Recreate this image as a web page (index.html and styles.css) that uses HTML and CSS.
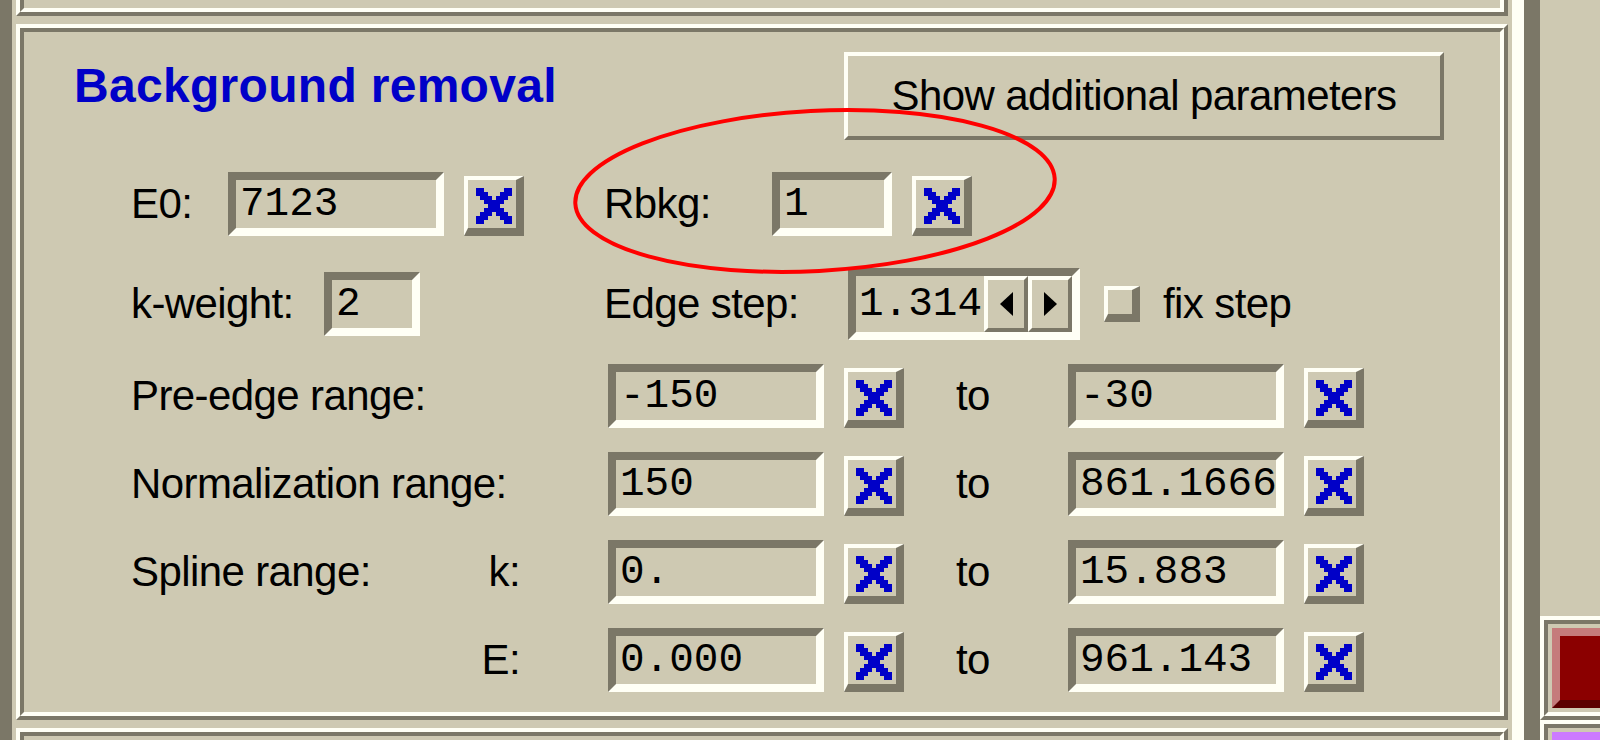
FILE: index.html
```html
<!DOCTYPE html>
<html>
<head>
<meta charset="utf-8">
<title>Background removal</title>
<link rel="stylesheet" href="styles.css">
</head>
<body>
<div class="app">
  <div class="left-strip"></div>
  <div class="main-col">
    <div class="ridge top-panel"><div class="ridge-in"></div></div>
    <div class="ridge main-panel">
      <div class="ridge-in main-inner">
        <div class="header">
          <div class="title">Background removal</div>
          <div class="btn-show">Show additional parameters</div>
        </div>

        <div class="row row1">
          <div class="lbl w-e0">E0:</div>
          <div class="entry w216">7123</div>
          <div class="xbtn"><svg class="xicon" viewBox="0 0 9 9"><use href="#xg"/></svg></div>
          <div class="lbl w-rbkg">Rbkg:</div>
          <div class="entry w120">1</div>
          <div class="xbtn"><svg class="xicon" viewBox="0 0 9 9"><use href="#xg"/></svg></div>
        </div>

        <div class="row row2">
          <div class="lbl w-kw">k-weight:</div>
          <div class="entry w96">2</div>
          <div class="lbl w-edge">Edge step:</div>
          <div class="spinbox">
            <div class="spin-text">1.314</div>
            <div class="spin-btn"><svg class="arrow" viewBox="0 0 13 24"><polygon points="13,0 13,24 0,12"/></svg></div>
            <div class="spin-btn"><svg class="arrow" viewBox="0 0 13 24"><polygon points="0,0 0,24 13,12"/></svg></div>
          </div>
          <div class="check"></div>
          <div class="lbl fix">fix step</div>
        </div>

        <div class="row range">
          <div class="lbl w-range">Pre-edge range:</div>
          <div class="entry w216">-150</div>
          <div class="xbtn"><svg class="xicon" viewBox="0 0 9 9"><use href="#xg"/></svg></div>
          <div class="lbl w-to">to</div>
          <div class="entry w216">-30</div>
          <div class="xbtn"><svg class="xicon" viewBox="0 0 9 9"><use href="#xg"/></svg></div>
        </div>

        <div class="row range">
          <div class="lbl w-range">Normalization range:</div>
          <div class="entry w216">150</div>
          <div class="xbtn"><svg class="xicon" viewBox="0 0 9 9"><use href="#xg"/></svg></div>
          <div class="lbl w-to">to</div>
          <div class="entry w216">861.1666</div>
          <div class="xbtn"><svg class="xicon" viewBox="0 0 9 9"><use href="#xg"/></svg></div>
        </div>

        <div class="row range">
          <div class="lbl w-range split"><span>Spline range:</span><span>k:</span></div>
          <div class="entry w216">0.</div>
          <div class="xbtn"><svg class="xicon" viewBox="0 0 9 9"><use href="#xg"/></svg></div>
          <div class="lbl w-to">to</div>
          <div class="entry w216">15.883</div>
          <div class="xbtn"><svg class="xicon" viewBox="0 0 9 9"><use href="#xg"/></svg></div>
        </div>

        <div class="row range">
          <div class="lbl w-range split"><span></span><span>E:</span></div>
          <div class="entry w216">0.000</div>
          <div class="xbtn"><svg class="xicon" viewBox="0 0 9 9"><use href="#xg"/></svg></div>
          <div class="lbl w-to">to</div>
          <div class="entry w216">961.143</div>
          <div class="xbtn"><svg class="xicon" viewBox="0 0 9 9"><use href="#xg"/></svg></div>
        </div>
      </div>
    </div>
    <div class="ridge bottom-panel"><div class="ridge-in"></div></div>
  </div>
  <div class="sash"></div>
  <div class="right-col">
    <div class="ridge rframe"><div class="ridge-in rframe-in"><div class="color-btn red"></div></div></div>
    <div class="ridge rframe last"><div class="ridge-in rframe-in"><div class="color-btn purple"></div></div></div>
  </div>
</div>

<svg class="overlay" width="1600" height="740" viewBox="0 0 1600 740">
  <ellipse cx="815" cy="191" rx="240" ry="80" transform="rotate(-3 815 191)" fill="none" stroke="#ff0000" stroke-width="4"/>
</svg>

<svg width="0" height="0" class="defs">
  <defs>
    <path id="xg" d="M0 0h2v1h-2z M7 0h2v1h-2z M0 1h3v1h-3z M6 1h3v1h-3z M1 2h3v1h-3z M5 2h3v1h-3z M2 3h5v1h-5z M3 4h3v1h-3z M2 5h5v1h-5z M1 6h3v1h-3z M5 6h3v1h-3z M0 7h3v1h-3z M6 7h3v1h-3z M0 8h2v1h-2z M7 8h2v1h-2z"/>
  </defs>
</svg>
</body>
</html>
```

FILE: styles.css
```css
* { box-sizing: border-box; margin: 0; padding: 0; }

html, body {
  width: 1600px;
  height: 740px;
  overflow: hidden;
}

body {
  background: #cec9b2;
  font-family: "Liberation Sans", Arial, sans-serif;
  color: #000;
  position: relative;
}

.app {
  display: flex;
  height: 740px;
  overflow: hidden;
}

.left-strip {
  flex: none;
  width: 12px;
  background: #7b7767;
}

.main-col {
  flex: none;
  width: 1500px;
  padding: 0 4px;
  display: flex;
  flex-direction: column;
  gap: 8px;
}

.ridge {
  border: 4px solid;
  border-color: #fffff5 #7b7767 #7b7767 #fffff5;
}

.ridge-in {
  height: 100%;
  border: 4px solid;
  border-color: #7b7767 #fffff5 #fffff5 #7b7767;
}

/* only the lower edge of the panel above is visible */
.top-panel {
  flex: none;
  height: 16px;
  border-top: 0;
}

.top-panel .ridge-in {
  border-top: 0;
}

.main-panel {
  flex: none;
  height: 696px;
}

/* only the upper edge of the panel below is visible */
.bottom-panel {
  flex: none;
  height: 12px;
  border-bottom: 0;
  overflow: hidden;
}

.bottom-panel .ridge-in {
  border-bottom: 0;
}

.main-inner {
  padding-top: 20px;
}

/* header */
.header {
  display: flex;
  height: 88px;
}

.title {
  flex: none;
  width: 770px;
  margin-left: 50px;
  margin-top: 10px;
  font-weight: bold;
  font-size: 48px;
  line-height: 48px;
  color: #0000c8;
  letter-spacing: 0.3px;
}

.btn-show {
  flex: none;
  width: 600px;
  height: 88px;
  border-style: solid;
  border-width: 4px;
  border-color: #fffff5 #7b7767 #7b7767 #fffff5;
  display: flex;
  align-items: center;
  justify-content: center;
  font-size: 42px;
  letter-spacing: -0.6px;
}

/* rows */
.row {
  display: flex;
  align-items: center;
  padding-left: 107px;
}

.row1 { margin-top: 32px; height: 64px; }
.row2 { margin-top: 32px; height: 72px; }
.range { margin-top: 24px; height: 64px; }

.lbl {
  flex: none;
  font-size: 42px;
  letter-spacing: -0.6px;
  white-space: nowrap;
}

.w-e0 { width: 97px; }
.w-rbkg { width: 168px; margin-left: 80px; }
.w-kw { width: 193px; }
.w-edge { width: 244px; margin-left: 184px; }
.w-range { width: 477px; }
.w-to { width: 112px; margin-left: 52px; }

.split {
  display: flex;
  justify-content: space-between;
  padding-right: 88px;
}

.fix { margin-left: 23px; }

.entry {
  flex: none;
  height: 64px;
  border: 8px solid;
  border-color: #7b7767 #fffff5 #fffff5 #7b7767;
  display: flex;
  align-items: center;
  padding-left: 4px;
  font-family: "Liberation Mono", "Courier New", monospace;
  font-size: 41px;
  white-space: nowrap;
  overflow: hidden;
}

.w216 { width: 216px; }
.w120 { width: 120px; }
.w96 { width: 96px; }

.xbtn {
  flex: none;
  align-self: flex-end;
  width: 60px;
  height: 60px;
  margin-left: 20px;
  border-style: solid;
  border-width: 4px 8px 8px 4px;
  border-color: #fffff5 #7b7767 #7b7767 #fffff5;
  padding: 8px 0 0 8px;
}

.xicon {
  display: block;
  width: 36px;
  height: 36px;
  fill: #0000c8;
  shape-rendering: crispEdges;
}

/* spinbox */
.spinbox {
  flex: none;
  width: 232px;
  height: 72px;
  border: 8px solid;
  border-color: #7b7767 #fffff5 #fffff5 #7b7767;
  display: flex;
}

.spin-text {
  flex: none;
  width: 128px;
  display: flex;
  align-items: center;
  padding-left: 3px;
  font-family: "Liberation Mono", "Courier New", monospace;
  font-size: 41px;
}

.spin-btn {
  flex: none;
  width: 44px;
  height: 56px;
  border: 4px solid;
  border-color: #fffff5 #7b7767 #7b7767 #fffff5;
  display: flex;
  align-items: center;
  justify-content: center;
}

.arrow {
  width: 13px;
  height: 24px;
  fill: #000;
}

.check {
  flex: none;
  width: 36px;
  height: 36px;
  margin-left: 24px;
  border-style: solid;
  border-width: 4px 8px 8px 4px;
  border-color: #fffff5 #7b7767 #7b7767 #fffff5;
}

/* sash + right column */
.sash {
  flex: none;
  width: 28px;
  border-left: 12px solid #fffff5;
  background: #7b7767;
}

.right-col {
  flex: none;
  width: 60px;
  height: 740px;
  padding-top: 616px;
  overflow: hidden;
}

.rframe {
  width: 120px;
  height: 104px;
}

.rframe.last {
  height: 20px;
  border-bottom: 0;
}

.rframe.last .ridge-in {
  border-bottom: 0;
  padding-bottom: 0;
}

.rframe-in {
  padding: 4px;
}

.color-btn {
  height: 80px;
}

.red {
  background: #8b0000;
  border-style: solid;
  border-width: 8px 0 8px 8px;
  border-color: #c57b7b #c57b7b #5b0000 #c57b7b;
}

.purple {
  height: 8px;
  background: #cc7aff;
}

/* annotation overlay */
.overlay {
  position: absolute;
  left: 0;
  top: 0;
  pointer-events: none;
}

.defs {
  position: absolute;
}
```
